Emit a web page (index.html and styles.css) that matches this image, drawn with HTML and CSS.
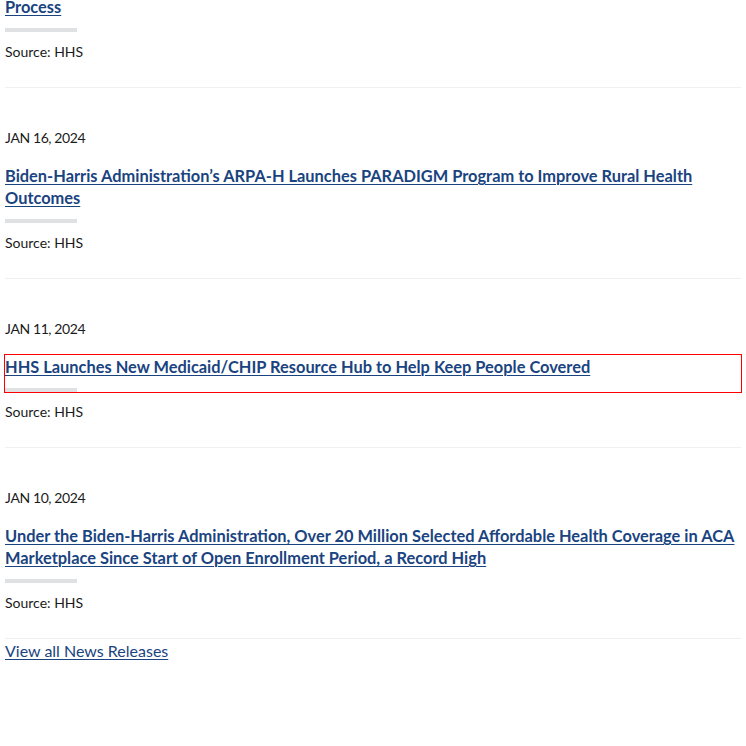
FILE: index.html
```
<!DOCTYPE html>
<html lang="en">
<head>
<meta charset="utf-8">
<title>News Releases</title>
<link rel="stylesheet" href="styles.css">
</head>
<body>
<div class="news">
  <div class="item item-first">
    <h3 class="title"><a href="#">Process</a></h3>
    <p class="source">Source: HHS</p>
  </div>
  <div class="item">
    <p class="date">JAN 16, 2024</p>
    <h3 class="title"><a href="#">Biden-Harris Administration’s ARPA-H Launches PARADIGM Program to Improve Rural Health Outcomes</a></h3>
    <p class="source">Source: HHS</p>
  </div>
  <div class="item">
    <p class="date">JAN 11, 2024</p>
    <h3 class="title title-focus"><a href="#">HHS Launches New Medicaid/CHIP Resource Hub to Help Keep People Covered</a></h3>
    <p class="source">Source: HHS</p>
  </div>
  <div class="item">
    <p class="date">JAN 10, 2024</p>
    <h3 class="title"><a href="#">Under the Biden-Harris Administration, Over 20 Million Selected Affordable Health Coverage in ACA Marketplace Since Start of Open Enrollment Period, a Record High</a></h3>
    <p class="source">Source: HHS</p>
  </div>
  <a class="view-all" href="#">View all News Releases</a>
</div>
</body>
</html>
```
FILE: styles.css
```
html, body {
  margin: 0;
  padding: 0;
  background: #ffffff;
}
body {
  font-family: "Lato", "Roboto", sans-serif;
  color: #1b1b1b;
  overflow: hidden;
}
.news {
  margin: -5px 0 0 5px;
  width: 736px;
}
.item {
  padding: 40px 0 25px;
  border-bottom: 1px solid #f0f0f0;
}
.item-first {
  padding-top: 0;
}
.date {
  margin: 0;
  font-size: 14px;
  line-height: 20px;
  letter-spacing: -0.4px;
  color: #1b1b1b;
}
.title {
  margin: 16px 0 0;
  padding-top: 1px;
  font-size: 16.4px;
  line-height: 22px;
  font-weight: 700;
}
.item-first .title {
  margin-top: 0;
}
.title a {
  color: #1a4480;
  text-decoration: underline;
  text-decoration-thickness: 1px;
  text-underline-offset: 2px;
}
.title::after {
  content: "";
  display: block;
  width: 72px;
  height: 4px;
  margin-top: 10px;
  background: #dfe1e2;
}
.title-focus {
  outline: 1px solid #ff0000;
}
.source {
  margin: 10px 0 0;
  font-size: 14px;
  line-height: 20px;
  color: #1b1b1b;
}
.view-all {
  display: inline-block;
  font-size: 16px;
  line-height: 24px;
  color: #1a4480;
  text-decoration: underline;
  text-decoration-thickness: 1px;
  text-underline-offset: 2px;
}
```
